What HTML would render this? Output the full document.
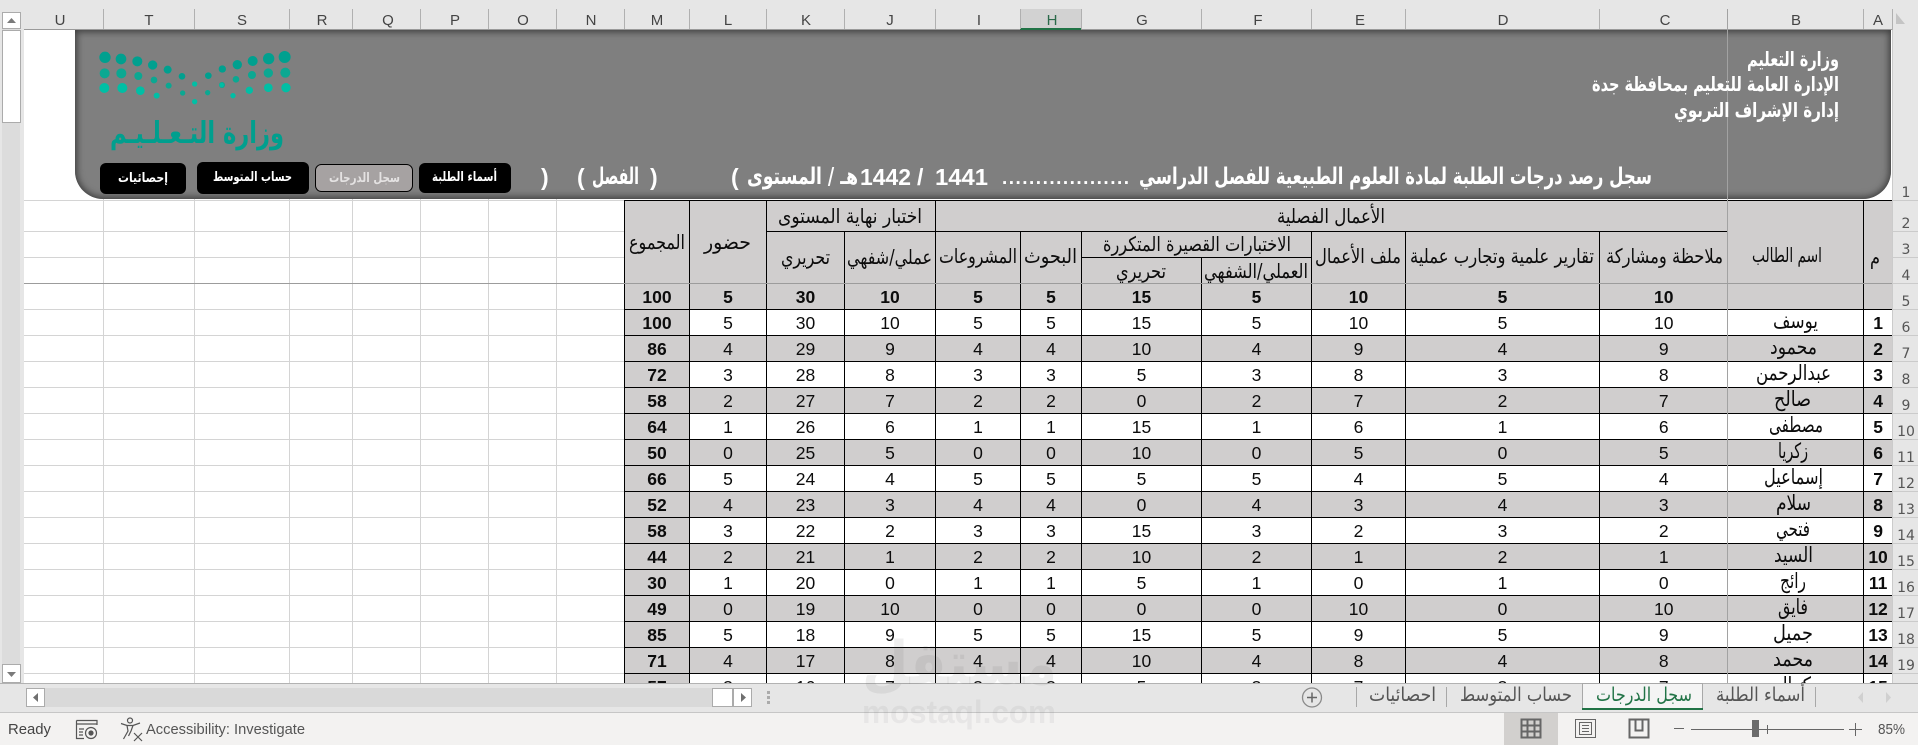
<!DOCTYPE html>
<html lang="ar"><head><meta charset="utf-8"><title>سجل الدرجات</title>
<style>
html,body{margin:0;padding:0;width:1918px;height:745px;overflow:hidden;background:#e6e6e6}
.abs{position:absolute}
#cells{left:24px;top:30px;width:1868px;height:653px;background:#fff}
#shape{left:75px;top:30px;width:1816px;height:169px;background:#7f7f7f;border-radius:0 0 28px 28px;box-shadow:inset 0 0 7px 2px #3f3f3f}
#wrap{left:0;top:0;width:1892px;height:683px;overflow:hidden}
table{position:absolute;left:624px;top:200px;border-collapse:collapse;table-layout:fixed;width:1268px;font:17.5px "Liberation Sans",sans-serif;color:#0c0c0c}
td{border:1px solid #000;padding:1px 0 0;text-align:center;height:24px;line-height:24px;overflow:hidden;background:#fff}
.g td,td.g{background:#d0cece}
td.b{font-weight:bold;background:#d0cece}
td.n{font-weight:bold}
.h td{background:#d0cece;font-weight:bold}
tr:nth-child(n+4) td:nth-child(11){border-right:0}
tr:nth-child(n+4) td:nth-child(12){border-left:0}
td.nr{border-right:0}
td.nl{border-left:0}
#status{left:0;top:712px;width:1918px;height:33px;background:#f3f2f1;border-top:1px solid #c6c6c6;box-sizing:border-box}
svg{position:absolute;left:0;top:0}
text{font-family:"DejaVu Sans","Liberation Sans",sans-serif}
.ar{font-size:20px;fill:#0c0c0c}
.bd{font-weight:bold}
.w{fill:#fff;font-weight:bold;font-size:20px}
.btn{fill:#fff;font-size:13px;font-weight:bold}
.col text,.col{font-family:"Liberation Sans",sans-serif;font-size:15px;fill:#444;text-anchor:middle}
.row{font-family:"Liberation Sans",sans-serif;font-size:14px;fill:#555;text-anchor:middle}
.tab{font-size:19px;fill:#555}
.lat{font-family:"Liberation Sans",sans-serif}
</style></head>
<body>
<div class="abs" id="cells"></div>
<svg width="1918" height="745" shape-rendering="crispEdges" style="z-index:1">
<path d="M103.5 30V683M194.5 30V683M289.5 30V683M352.5 30V683M420.5 30V683M488.5 30V683M556.5 30V683M24 231.5H624M24 257.5H624M24 309.5H624M24 335.5H624M24 361.5H624M24 387.5H624M24 413.5H624M24 439.5H624M24 465.5H624M24 491.5H624M24 517.5H624M24 543.5H624M24 569.5H624M24 595.5H624M24 621.5H624M24 647.5H624M24 673.5H624M24 200.5H624" stroke="#d4d4d4" fill="none"/>
</svg>
<div class="abs" id="shape" style="z-index:2"></div>
<div class="abs" id="wrap" style="z-index:3">
<table>
<colgroup><col style="width:65px"><col style="width:77px"><col style="width:78px"><col style="width:91px"><col style="width:85px"><col style="width:61px"><col style="width:120px"><col style="width:110px"><col style="width:94px"><col style="width:194px"><col style="width:128px"><col style="width:136px"><col style="width:29px"></colgroup>
<tr class="h" style="height:31px"><td rowspan="3"></td><td rowspan="3"></td><td colspan="2"></td><td colspan="7" class="nr"></td><td rowspan="3" class="nl"></td><td rowspan="3"></td></tr>
<tr class="h" style="height:26px"><td rowspan="2"></td><td rowspan="2"></td><td rowspan="2"></td><td rowspan="2"></td><td colspan="2"></td><td rowspan="2"></td><td rowspan="2"></td><td rowspan="2" class="nr"></td></tr>
<tr class="h" style="height:26px"><td></td><td></td></tr>
<tr class="h"><td>100</td><td>5</td><td>30</td><td>10</td><td>5</td><td>5</td><td>15</td><td>5</td><td>10</td><td>5</td><td>10</td><td></td><td></td></tr>
<tr><td class="b">100</td><td>5</td><td>30</td><td>10</td><td>5</td><td>5</td><td>15</td><td>5</td><td>10</td><td>5</td><td>10</td><td></td><td class="n">1</td></tr>
<tr class="g"><td class="b">86</td><td>4</td><td>29</td><td>9</td><td>4</td><td>4</td><td>10</td><td>4</td><td>9</td><td>4</td><td>9</td><td></td><td class="n">2</td></tr>
<tr><td class="b">72</td><td>3</td><td>28</td><td>8</td><td>3</td><td>3</td><td>5</td><td>3</td><td>8</td><td>3</td><td>8</td><td></td><td class="n">3</td></tr>
<tr class="g"><td class="b">58</td><td>2</td><td>27</td><td>7</td><td>2</td><td>2</td><td>0</td><td>2</td><td>7</td><td>2</td><td>7</td><td></td><td class="n">4</td></tr>
<tr><td class="b">64</td><td>1</td><td>26</td><td>6</td><td>1</td><td>1</td><td>15</td><td>1</td><td>6</td><td>1</td><td>6</td><td></td><td class="n">5</td></tr>
<tr class="g"><td class="b">50</td><td>0</td><td>25</td><td>5</td><td>0</td><td>0</td><td>10</td><td>0</td><td>5</td><td>0</td><td>5</td><td></td><td class="n">6</td></tr>
<tr><td class="b">66</td><td>5</td><td>24</td><td>4</td><td>5</td><td>5</td><td>5</td><td>5</td><td>4</td><td>5</td><td>4</td><td></td><td class="n">7</td></tr>
<tr class="g"><td class="b">52</td><td>4</td><td>23</td><td>3</td><td>4</td><td>4</td><td>0</td><td>4</td><td>3</td><td>4</td><td>3</td><td></td><td class="n">8</td></tr>
<tr><td class="b">58</td><td>3</td><td>22</td><td>2</td><td>3</td><td>3</td><td>15</td><td>3</td><td>2</td><td>3</td><td>2</td><td></td><td class="n">9</td></tr>
<tr class="g"><td class="b">44</td><td>2</td><td>21</td><td>1</td><td>2</td><td>2</td><td>10</td><td>2</td><td>1</td><td>2</td><td>1</td><td></td><td class="n">10</td></tr>
<tr><td class="b">30</td><td>1</td><td>20</td><td>0</td><td>1</td><td>1</td><td>5</td><td>1</td><td>0</td><td>1</td><td>0</td><td></td><td class="n">11</td></tr>
<tr class="g"><td class="b">49</td><td>0</td><td>19</td><td>10</td><td>0</td><td>0</td><td>0</td><td>0</td><td>10</td><td>0</td><td>10</td><td></td><td class="n">12</td></tr>
<tr><td class="b">85</td><td>5</td><td>18</td><td>9</td><td>5</td><td>5</td><td>15</td><td>5</td><td>9</td><td>5</td><td>9</td><td></td><td class="n">13</td></tr>
<tr class="g"><td class="b">71</td><td>4</td><td>17</td><td>8</td><td>4</td><td>4</td><td>10</td><td>4</td><td>8</td><td>4</td><td>8</td><td></td><td class="n">14</td></tr>
<tr><td class="b">57</td><td>3</td><td>16</td><td>7</td><td>3</td><td>3</td><td>5</td><td>3</td><td>7</td><td>3</td><td>7</td><td></td><td class="n">15</td></tr>
</table>
</div>
<div class="abs" id="status" style="z-index:4"></div>
<svg width="1918" height="745" style="z-index:5">
<!-- column header -->
<g shape-rendering="crispEdges">
<rect x="24" y="9" width="1868" height="21" fill="#e6e6e6"/>
<rect x="1020" y="9" width="61" height="20" fill="#d2d2d2"/>
<rect x="1020" y="28" width="61" height="2" fill="#217346"/>
<path d="M103.5 9V29M194.5 9V29M289.5 9V29M352.5 9V29M420.5 9V29M488.5 9V29M556.5 9V29M624.5 9V29M689.5 9V29M766.5 9V29M844.5 9V29M935.5 9V29M1020.5 9V29M1081.5 9V29M1201.5 9V29M1311.5 9V29M1405.5 9V29M1599.5 9V29M1863.5 9V29M1892.5 9V30" stroke="#b0b0b0" fill="none"/>
<path d="M24 29.5H1020M1081 29.5H1892" stroke="#9a9a9a" fill="none"/>
<rect x="1892" y="30" width="26" height="653" fill="#e6e6e6"/>
<path d="M1892.5 30V683M1892 200.5H1918M1892 231.5H1918M1892 257.5H1918M1892 283.5H1918M1892 309.5H1918M1892 335.5H1918M1892 361.5H1918M1892 387.5H1918M1892 413.5H1918M1892 439.5H1918M1892 465.5H1918M1892 491.5H1918M1892 517.5H1918M1892 543.5H1918M1892 569.5H1918M1892 595.5H1918M1892 621.5H1918M1892 647.5H1918M1892 673.5H1918" stroke="#cbcbcb" fill="none"/>
<!-- freeze panes -->
<path d="M1727.5 9V683" stroke="#a2a2a2" fill="none"/>
<path d="M24 283.5H1892" stroke="#9c9c9c" fill="none"/>
</g>
<path d="M1896 13L1905 24V24H1896Z" fill="#c4c4c4"/>
<g class="col">
<text x="60" y="25">U</text><text x="149" y="25">T</text><text x="242" y="25">S</text><text x="322" y="25">R</text><text x="388" y="25">Q</text><text x="455" y="25">P</text><text x="523" y="25">O</text><text x="591" y="25">N</text><text x="657" y="25">M</text><text x="728" y="25">L</text><text x="806" y="25">K</text><text x="890" y="25">J</text><text x="979" y="25">I</text><text x="1052" y="25" style="fill:#2b6a4a">H</text><text x="1142" y="25">G</text><text x="1258" y="25">F</text><text x="1360" y="25">E</text><text x="1503" y="25">D</text><text x="1665" y="25">C</text><text x="1796" y="25">B</text><text x="1878" y="25">A</text>
</g>
<g class="row">
<text x="1906" y="197">1</text><text x="1906" y="228">2</text><text x="1906" y="254">3</text><text x="1906" y="280">4</text><text x="1906" y="306">5</text><text x="1906" y="332">6</text><text x="1906" y="358">7</text><text x="1906" y="384">8</text><text x="1906" y="410">9</text><text x="1906" y="436">10</text><text x="1906" y="462">11</text><text x="1906" y="488">12</text><text x="1906" y="514">13</text><text x="1906" y="540">14</text><text x="1906" y="566">15</text><text x="1906" y="592">16</text><text x="1906" y="618">17</text><text x="1906" y="644">18</text><text x="1906" y="670">19</text>
</g>
<!-- vertical scrollbar -->
<g shape-rendering="crispEdges">
<rect x="2" y="28" width="18" height="636" fill="#dcdcdc"/>
<rect x="2.5" y="12.5" width="18" height="16" fill="#fff" stroke="#ababab"/>
<rect x="2.5" y="30.5" width="18" height="92" fill="#fff" stroke="#ababab"/>
<rect x="2.5" y="664.5" width="18" height="18" fill="#fff" stroke="#ababab"/>
</g>
<path d="M7 23L11.500 18L16 23Z" fill="#7a7a7a"/>
<path d="M7 672L11.500 677L16 672Z" fill="#7a7a7a"/>
<!-- logo -->
<g transform="translate(90 40) scale(.3333)">
<g fill="#00a08f"><circle cx="45" cy="52" r="17"/><circle cx="93" cy="57" r="16"/><circle cx="142" cy="64" r="15"/><circle cx="188" cy="75" r="14"/><circle cx="233" cy="89" r="12"/><circle cx="276" cy="109" r="10"/><circle cx="355" cy="107" r="10"/><circle cx="397" cy="87" r="11"/><circle cx="442" cy="74" r="14"/><circle cx="488" cy="63" r="15"/><circle cx="536" cy="56" r="17"/><circle cx="584" cy="51" r="18"/></g>
<g fill="#0ba892"><circle cx="44" cy="100" r="15"/><circle cx="94" cy="100" r="15"/><circle cx="145" cy="108" r="12"/><circle cx="192" cy="120" r="10"/><circle cx="236" cy="137" r="9"/><circle cx="278" cy="159" r="8"/><circle cx="353" cy="158" r="8"/><circle cx="396" cy="135" r="9"/><circle cx="438" cy="118" r="10"/><circle cx="486" cy="105" r="12"/><circle cx="535" cy="99" r="14"/><circle cx="586" cy="98" r="15"/></g>
<g fill="#00bfa5"><circle cx="43" cy="144" r="15"/><circle cx="97" cy="144" r="15"/><circle cx="151" cy="152" r="13"/><circle cx="200" cy="167" r="9"/><circle cx="314" cy="132" r="8"/><circle cx="314" cy="185" r="8"/><circle cx="395" cy="135" r="7"/><circle cx="429" cy="167" r="8"/><circle cx="478" cy="151" r="11"/><circle cx="535" cy="143" r="13"/><circle cx="588" cy="143" r="14"/></g>
</g>
<text x="110" y="143" font-size="30" font-weight="bold" fill="#009f8e" textLength="174" lengthAdjust="spacingAndGlyphs">وزارة التـعـلـيـم</text>
<!-- buttons -->
<g>
<rect x="100" y="163" width="86" height="31" rx="6" fill="#000"/>
<rect x="197" y="162" width="112" height="32" rx="6" fill="#000"/>
<rect x="315.500" y="164.500" width="97" height="27" rx="6" fill="#a6a2a2" stroke="#000"/>
<rect x="419" y="163" width="92" height="30" rx="6" fill="#000"/>
</g>
<text class="btn" x="118" y="182" textLength="50" lengthAdjust="spacingAndGlyphs">إحصائيات</text>
<text class="btn" x="213" y="181" textLength="79" lengthAdjust="spacingAndGlyphs">حساب المتوسط</text>
<text class="btn" x="329" y="182" textLength="71" lengthAdjust="spacingAndGlyphs" style="fill:#e4e2e2">سجل الدرجات</text>
<text class="btn" x="432" y="181" textLength="65" lengthAdjust="spacingAndGlyphs">أسماء الطلبة</text>
<!-- banner text -->
<text class="w" x="1747" y="66" textLength="92" lengthAdjust="spacingAndGlyphs">وزارة التعليم</text>
<text class="w" x="1592" y="91" textLength="247" lengthAdjust="spacingAndGlyphs">الإدارة العامة للتعليم بمحافظة جدة</text>
<text class="w" x="1674" y="117" textLength="165" lengthAdjust="spacingAndGlyphs">إدارة الإشراف التربوي</text>
<g class="w" style="font-size:23px">
<text x="1139" y="184" textLength="513" lengthAdjust="spacingAndGlyphs" fill="#fff">سجل رصد درجات الطلبة لمادة العلوم الطبيعية للفصل الدراسي</text>
<text class="lat" x="1002" y="184" font-size="19" textLength="127" lengthAdjust="spacing" fill="#fff" style="font-size:19px">...................</text>
<text class="lat" x="935" y="185" textLength="53" lengthAdjust="spacingAndGlyphs" fill="#fff">1441</text>
<text class="lat" x="917" y="185" fill="#fff">/</text>
<text class="lat" x="860" y="185" textLength="51" lengthAdjust="spacingAndGlyphs" fill="#fff">1442</text>
<text x="747" y="184" textLength="111" lengthAdjust="spacingAndGlyphs" fill="#fff">هـ / المستوى</text>
<text class="lat" x="731" y="185" fill="#fff">(</text>
<text class="lat" x="650" y="185" fill="#fff">)</text>
<text x="592" y="184" textLength="47" lengthAdjust="spacingAndGlyphs" fill="#fff">الفصل</text>
<text class="lat" x="577" y="185" fill="#fff">(</text>
<text class="lat" x="541" y="185" fill="#fff">)</text>
</g>
<!-- table headers -->
<g class="ar">
<text x="1277" y="223" textLength="108" lengthAdjust="spacingAndGlyphs">الأعمال الفصلية</text>
<text x="778" y="223" textLength="144" lengthAdjust="spacingAndGlyphs">اختبار نهاية المستوى</text>
<text x="1103" y="251" textLength="188" lengthAdjust="spacingAndGlyphs">الاختبارات القصيرة المتكررة</text>
<text x="1116" y="278" textLength="50" lengthAdjust="spacingAndGlyphs">تحريري</text>
<text x="1204" y="278" textLength="104" lengthAdjust="spacingAndGlyphs">العملي/الشفهي</text>
<text x="781" y="264" textLength="49" lengthAdjust="spacingAndGlyphs">تحريري</text>
<text x="847" y="264" textLength="85" lengthAdjust="spacingAndGlyphs">عملي/شفهي</text>
<text x="939" y="263" textLength="78" lengthAdjust="spacingAndGlyphs">المشروعات</text>
<text x="1024" y="263" textLength="53" lengthAdjust="spacingAndGlyphs">البحوث</text>
<text x="704" y="249" textLength="47" lengthAdjust="spacingAndGlyphs">حضور</text>
<text x="629" y="249" textLength="56" lengthAdjust="spacingAndGlyphs">المجموع</text>
<text x="1315" y="263" textLength="86" lengthAdjust="spacingAndGlyphs">ملف الأعمال</text>
<text x="1410" y="263" textLength="184" lengthAdjust="spacingAndGlyphs">تقارير علمية وتجارب عملية</text>
<text x="1606" y="263" textLength="117" lengthAdjust="spacingAndGlyphs">ملاحظة ومشاركة</text>
<text x="1752" y="262" textLength="70" lengthAdjust="spacingAndGlyphs">اسم الطالب</text>
<text x="1870" y="264" textLength="10" lengthAdjust="spacingAndGlyphs">م</text>
</g>
<!-- names -->
<g class="ar" style="font-size:21px">
<text x="1773" y="328" textLength="45" lengthAdjust="spacingAndGlyphs">يوسف</text>
<text x="1770" y="354" textLength="47" lengthAdjust="spacingAndGlyphs">محمود</text>
<text x="1756" y="380" textLength="75" lengthAdjust="spacingAndGlyphs">عبدالرحمن</text>
<text x="1774" y="406" textLength="37" lengthAdjust="spacingAndGlyphs">صالح</text>
<text x="1769" y="432" textLength="54" lengthAdjust="spacingAndGlyphs">مصطفى</text>
<text x="1778" y="458" textLength="30" lengthAdjust="spacingAndGlyphs">زكريا</text>
<text x="1764" y="484" textLength="59" lengthAdjust="spacingAndGlyphs">إسماعيل</text>
<text x="1776" y="510" textLength="35" lengthAdjust="spacingAndGlyphs">سلام</text>
<text x="1776" y="536" textLength="34" lengthAdjust="spacingAndGlyphs">فتحي</text>
<text x="1774" y="562" textLength="39" lengthAdjust="spacingAndGlyphs">السيد</text>
<text x="1780" y="588" textLength="26" lengthAdjust="spacingAndGlyphs">رائج</text>
<text x="1778" y="614" textLength="30" lengthAdjust="spacingAndGlyphs">فايق</text>
<text x="1773" y="640" textLength="40" lengthAdjust="spacingAndGlyphs">جميل</text>
<text x="1773" y="666" textLength="40" lengthAdjust="spacingAndGlyphs">محمد</text>
<text x="1775" y="692" textLength="36" lengthAdjust="spacingAndGlyphs">كمال</text>
</g>
<!-- bottom strip -->
<g shape-rendering="crispEdges">
<rect x="0" y="683" width="1918" height="29" fill="#e6e6e6"/>
<rect x="0" y="683" width="1918" height="1" fill="#b2b2b2"/>
<rect x="44" y="688" width="668" height="19" fill="#d9d9d9"/>
<rect x="26.500" y="688.500" width="18" height="18" fill="#fff" stroke="#ababab"/>
<rect x="712.500" y="688.500" width="20" height="18" fill="#fff" stroke="#ababab"/>
<rect x="733.500" y="688.500" width="18" height="18" fill="#fff" stroke="#ababab"/>
<rect x="767" y="691" width="3" height="3" fill="#ababab"/><rect x="767" y="696" width="3" height="3" fill="#ababab"/><rect x="767" y="701" width="3" height="3" fill="#ababab"/>
<rect x="1583" y="683" width="120" height="26" fill="#f4f4f4"/>
<path d="M1582.500 709V683.500H1702.500V709" fill="none" stroke="#a8a8a8"/>
<rect x="1582" y="708" width="121" height="2" fill="#217346"/>
<path d="M1356.500 687V707M1446.500 687V707M1815.500 687V707" stroke="#a8a8a8" fill="none"/>
</g>
<path d="M38 693L33 697.500L38 702Z" fill="#707070"/>
<path d="M741 693L746 697.500L741 702Z" fill="#707070"/>
<path d="M1863 692L1858 697.500L1863 703Z" fill="#d0d0d0"/>
<path d="M1886 692L1891 697.500L1886 703Z" fill="#d0d0d0"/>
<circle cx="1312" cy="697.500" r="9.500" fill="none" stroke="#8a8a8a" stroke-width="1.300"/>
<path d="M1307 697.500H1317M1312 692.500V702.500" stroke="#666" stroke-width="1.500"/>
<text class="tab" x="1369" y="701" textLength="67" lengthAdjust="spacingAndGlyphs">احصائيات</text>
<text class="tab" x="1460" y="701" textLength="112" lengthAdjust="spacingAndGlyphs">حساب المتوسط</text>
<text class="tab" x="1596" y="701" textLength="96" lengthAdjust="spacingAndGlyphs" style="fill:#217346">سجل الدرجات</text>
<text class="tab" x="1716" y="701" textLength="89" lengthAdjust="spacingAndGlyphs">أسماء الطلبة</text>
<!-- status bar -->
<text class="lat" x="8" y="734" font-size="15" fill="#444" textLength="43" lengthAdjust="spacingAndGlyphs">Ready</text>
<g fill="none" stroke="#555" stroke-width="1.200">
<path d="M76.500 720.500H97V725M76.500 720.500V738.500H84M76.500 724H97"/>
<path d="M79 729H84M79 732H83M79 735H83"/>
<circle cx="91" cy="733" r="5.500"/><circle cx="91" cy="733" r="2" fill="#555"/>
</g>
<g fill="none" stroke="#555" stroke-width="1.200">
<circle cx="130" cy="720.500" r="2.500"/>
<path d="M121 723.500L127 725.500H133L140 723M127 725.500L128 731L123.500 739M133 725.500L131 731L128.500 736"/>
<path d="M134 733L142 741M142 733L134 741"/>
</g>
<text class="lat" x="146" y="734" font-size="15" fill="#555" textLength="159" lengthAdjust="spacingAndGlyphs">Accessibility: Investigate</text>
<rect x="1504" y="713" width="54" height="32" fill="#d2d0ce" shape-rendering="crispEdges"/>
<g fill="none" stroke="#666" stroke-width="1.300" shape-rendering="crispEdges">
<path d="M1521.500 719.500H1540.500V737.500H1521.500ZM1527.500 719.500V737.500M1534.500 719.500V737.500M1521.500 725.500H1540.500M1521.500 731.500H1540.500" stroke-width="2"/>
<rect x="1575.500" y="719.500" width="20" height="18"/>
<rect x="1579.500" y="722.500" width="12" height="12"/>
<path d="M1582 725.500H1589M1582 728.500H1589M1582 731.500H1589"/>
<rect x="1629.500" y="719.500" width="19" height="18" stroke-width="1.600"/>
<path d="M1635.500 719.500V730.500H1642.500V719.500" stroke-width="1.600"/>
<path d="M1674 728.500H1684M1691 729.500H1844M1767.500 725V734M1849 729.500H1862M1855.500 723V736"/>
</g>
<rect x="1752" y="720" width="7" height="17" fill="#6b6b6b" shape-rendering="crispEdges"/>
<text class="lat" x="1878" y="734" font-size="15" fill="#555" textLength="27" lengthAdjust="spacingAndGlyphs">85%</text>
<!-- watermark -->
<text x="862" y="684" font-size="60" font-weight="bold" fill="rgba(80,80,80,.09)" textLength="195" lengthAdjust="spacingAndGlyphs">مستقل</text>
<text class="lat" x="862" y="723" font-size="32" font-weight="bold" fill="rgba(80,80,80,.07)" textLength="194" lengthAdjust="spacingAndGlyphs">mostaql.com</text>
</svg>
</body></html>
